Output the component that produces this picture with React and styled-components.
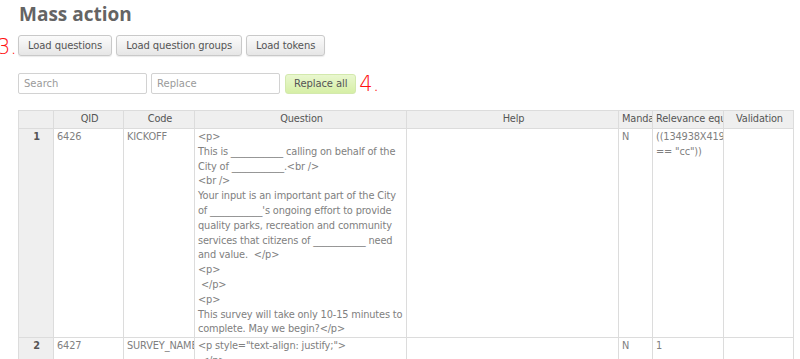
import React from "react";
import styled, { createGlobalStyle } from "styled-components";

const GlobalStyle = createGlobalStyle`
  html, body {
    margin: 0;
    padding: 0;
    background: #fff;
    overflow: hidden;
  }
  body {
    font-family: "DejaVu Sans", Verdana, sans-serif;
    font-size: 10px;
    color: #777;
  }
`;

const Page = styled.div`
  width: 800px;
  height: 359px;
  overflow: hidden;
`;

const Title = styled.h1`
  margin: 0 0 0 19px;
  padding-top: 1px;
  height: 34px;
  font-family: "Open Sans", "DejaVu Sans", sans-serif;
  font-weight: 700;
  font-size: 19px;
  line-height: 27px;
  color: #646464;
`;

const Row = styled.div`
  display: flex;
  align-items: center;
  height: ${(p) => p.$h}px;
  margin-bottom: ${(p) => p.$mb || 0}px;
`;

const Group = styled.div`
  display: flex;
  align-items: center;
  gap: 4px;
`;

const Gutter = styled.div`
  width: 18px;
  flex: none;
  display: flex;
  justify-content: flex-end;
`;

const Mark = styled.span`
  font-family: "DejaVu Sans", sans-serif;
  font-weight: 200;
  font-size: 21px;
  line-height: 22px;
  color: #f11;
  margin: ${(p) => p.$m || "0"};
`;

const Button = styled.button`
  height: 21px;
  padding: 0 9px;
  border: 1px solid #c9c9c9;
  border-radius: 3px;
  background: linear-gradient(#fbfbfb, #e6e6e6);
  box-shadow: 0 1px 1px rgba(0, 0, 0, 0.08);
  font-family: "DejaVu Sans", Verdana, sans-serif;
  font-size: 10px;
  letter-spacing: -0.1px;
  color: #555;
  cursor: pointer;
`;

const GreenButton = styled(Button)`
  height: 20px;
  padding: 0 8px;
  border-color: #d3e9ad;
  background: linear-gradient(#e9f7cf, #d6efa6);
  box-shadow: none;
  margin-left: 1px;
`;

const Input = styled.input`
  box-sizing: border-box;
  width: ${(p) => p.$w}px;
  height: 21px;
  padding: 0 5px;
  border: 1px solid #d2d2d2;
  border-radius: 2px;
  font-family: "DejaVu Sans", Verdana, sans-serif;
  font-size: 10px;
  color: #555;
  &::placeholder {
    color: #9a9a9a;
  }
`;

const TableWrap = styled.div`
  margin-left: 18px;
`;

const Table = styled.table`
  table-layout: fixed;
  border-collapse: collapse;
  width: 776px;
  color: #808080;
  font-size: 9.8px;
  line-height: 14.8px;
  letter-spacing: -0.15px;
`;

const Th = styled.th`
  border: 1px solid #dcdcdc;
  background: #efefef;
  font-weight: normal;
  color: #555;
  padding: 1px 1px 1px 3px;
  height: 15px;
  white-space: nowrap;
  overflow: hidden;
  text-overflow: clip;
  text-align: center;
`;

const Td = styled.td`
  border: 1px solid #dcdcdc;
  vertical-align: top;
  padding: 1px 2px 0 3px;
  overflow: hidden;
  white-space: ${(p) => (p.$pre ? "pre-wrap" : "normal")};
  word-break: keep-all;
`;

const NumTd = styled(Td)`
  background: #efefef;
  text-align: center;
  font-weight: bold;
  color: #555;
`;

const NoWrap = styled.span`
  white-space: nowrap;
`;

const widths = [35, 70, 71, 212, 212, 34, 71, 70];
const heads = ["", "QID", "Code", "Question", "Help", "Mandatory", "Relevance equation", "Validation"];

const q1 = `<p>
This is ___________ calling on behalf of the City of ___________.<br />
<br />
Your input is an important part of the City of ___________'s ongoing effort to provide quality parks, recreation and community services that citizens of ___________ need and value.  </p>
<p>
 </p>
<p>
This survey will take only 10-15 minutes to complete. May we begin?</p>`;

const q2 = `<p style="text-align: justify;">
 </p>`;

const rows = [
  { n: 1, qid: "6426", code: "KICKOFF", question: q1, mand: "N", rel: ["((134938X419X6426", '== "cc"))'] },
  { n: 2, qid: "6427", code: "SURVEY_NAME", question: q2, mand: "N", rel: ["1"] },
];

export default function App() {
  return (
    <Page>
      <GlobalStyle />
      <Title>Mass action</Title>
      <Row $h={21} $mb={17}>
        <Gutter>
          <Mark $m="3px 1px 0 0">3.</Mark>
        </Gutter>
        <Group>
          <Button>Load questions</Button>
          <Button>Load question groups</Button>
          <Button>Load tokens</Button>
        </Group>
      </Row>
      <Row $h={21} $mb={16}>
        <Gutter />
        <Group>
          <Input $w={129} placeholder="Search" />
          <Input $w={129} placeholder="Replace" />
          <GreenButton>Replace all</GreenButton>
          <Mark $m="0 0 0 -1px">4.</Mark>
        </Group>
      </Row>
      <TableWrap>
        <Table>
          <colgroup>
            {widths.map((w, i) => (
              <col key={i} style={{ width: w }} />
            ))}
          </colgroup>
          <thead>
            <tr>
              {heads.map((h, i) => (
                <Th key={i}>{h}</Th>
              ))}
            </tr>
          </thead>
          <tbody>
            {rows.map((r) => (
              <tr key={r.n}>
                <NumTd>{r.n}</NumTd>
                <Td>{r.qid}</Td>
                <Td>
                  <NoWrap>{r.code}</NoWrap>
                </Td>
                <Td $pre>{r.question}</Td>
                <Td />
                <Td>{r.mand}</Td>
                <Td>
                  {r.rel.map((l, i) => (
                    <div key={i}>
                      <NoWrap>{l}</NoWrap>
                    </div>
                  ))}
                </Td>
                <Td />
              </tr>
            ))}
          </tbody>
        </Table>
      </TableWrap>
    </Page>
  );
}
